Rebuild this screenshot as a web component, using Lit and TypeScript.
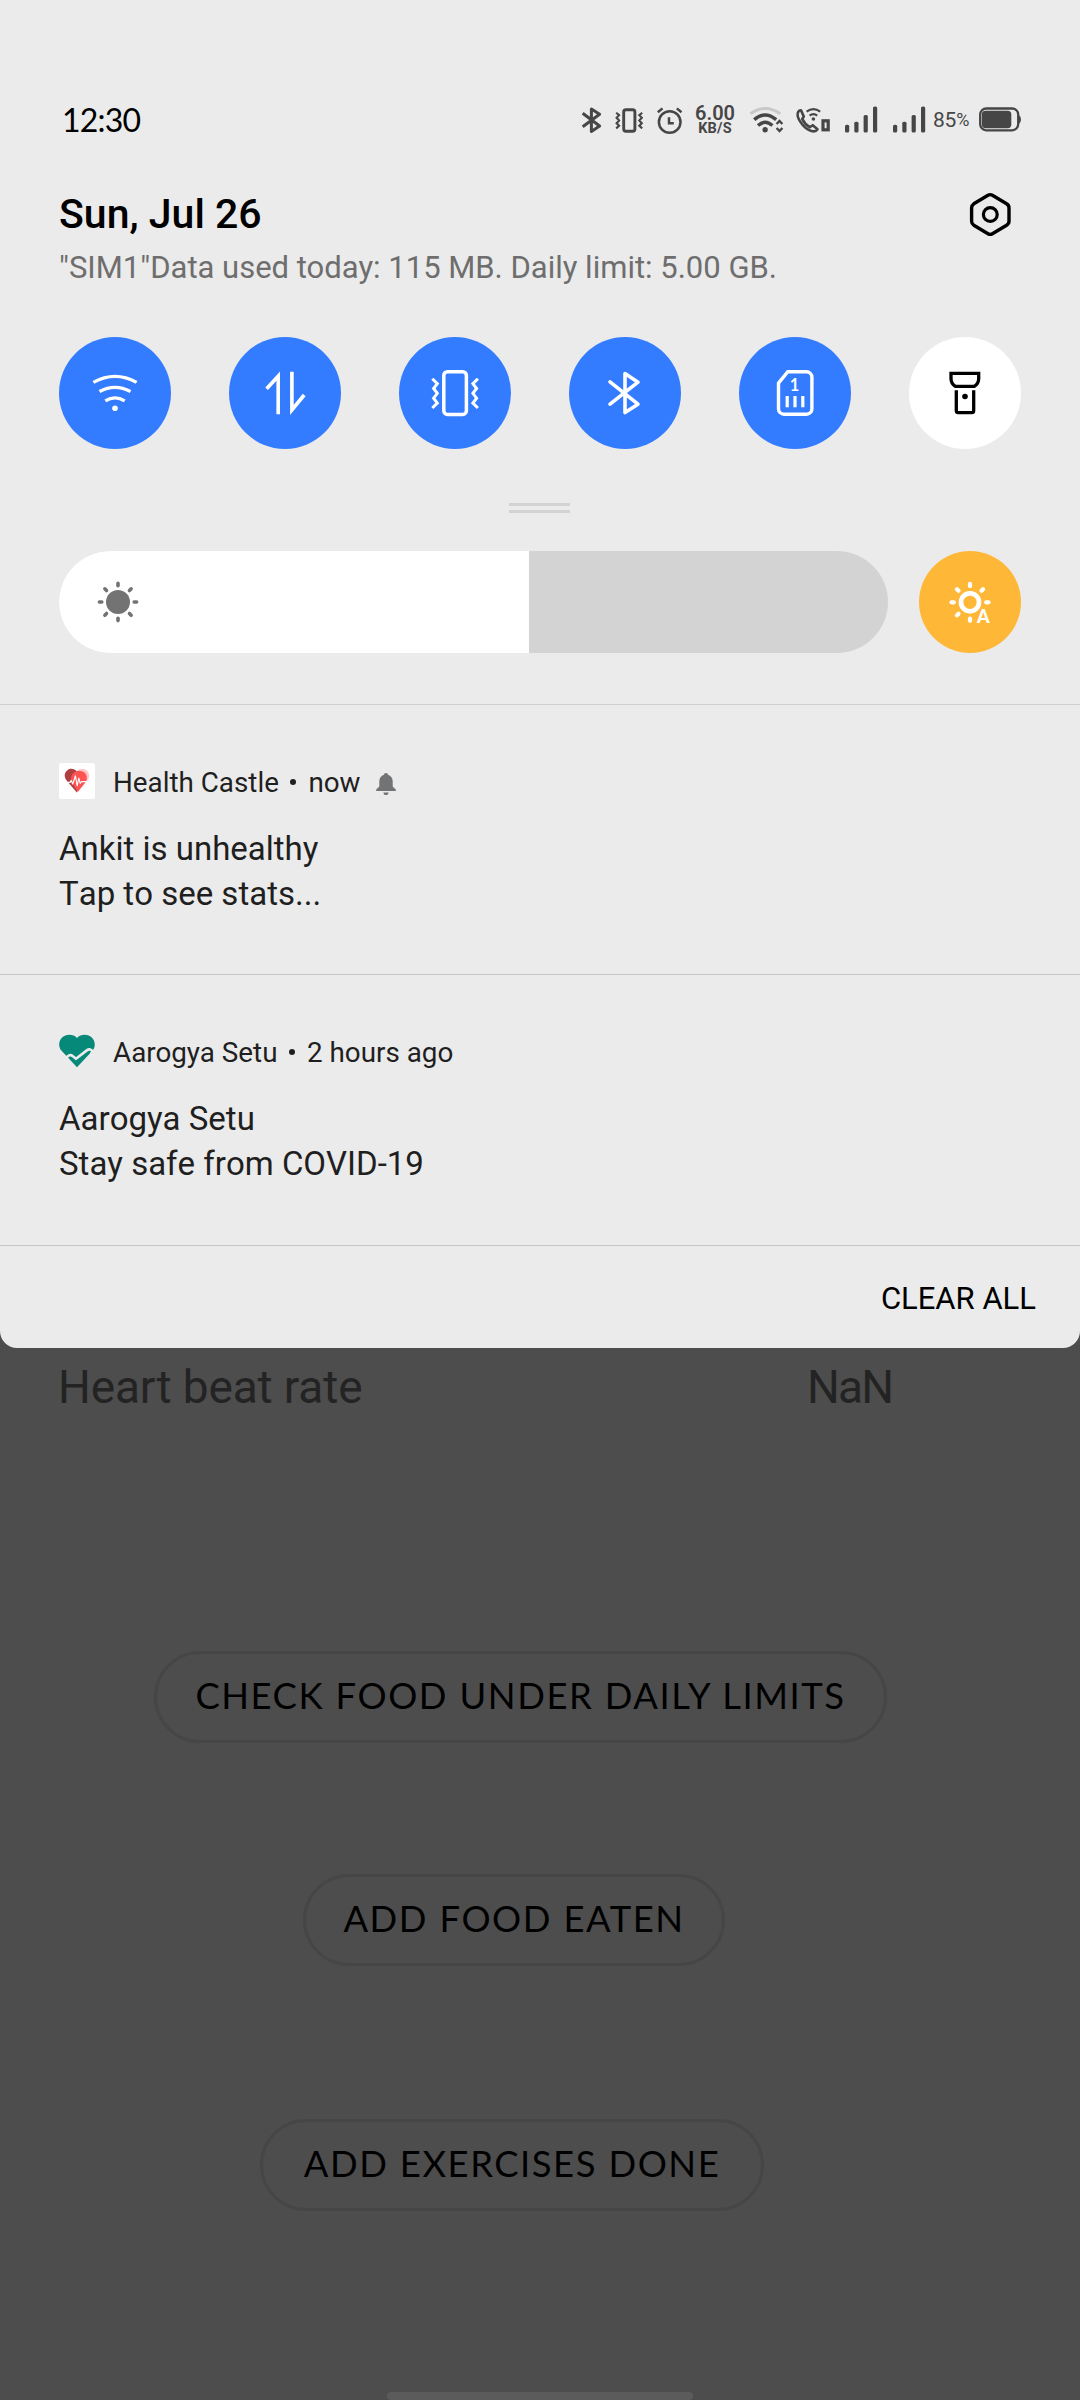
import { LitElement, html, svg, css } from "lit";
import { customElement, property } from "lit/decorators.js";

const rays = (cx: number, cy: number, from: number, to: number, angles: number[]) =>
  angles.map((deg) => {
    const a = (deg * Math.PI) / 180;
    const c = Math.cos(a);
    const s = Math.sin(a);
    return svg`<line x1=${cx + c * from} y1=${cy + s * from} x2=${cx + c * to} y2=${cy + s * to} />`;
  });

const tileIcons: Record<string, unknown> = {
  wifi: svg`<g stroke-width="3.3"><path d="M34.4 45.4Q56 33.2 77.6 45.4"/><path d="M40.5 54.5Q56 46.2 71.5 54.5"/><path d="M46.3 63.8Q56 58 65.7 63.8"/></g><circle cx="56" cy="71.3" r="2.8" fill="currentColor" stroke="none"/>`,
  data: svg`<g stroke-width="3.6" stroke-miterlimit="10"><path d="M37.6 51.8L49.2 39.2V77.3"/><path d="M62.9 34.7V73L75.2 58"/></g>`,
  vibrate: svg`<rect x="44.8" y="34.8" width="22.6" height="42.6" rx="3.6" stroke-width="3.5"/><g stroke-width="3"><path d="M33.3 41.7L38.3 46.7L34.6 51.5L38.3 56.3L34.6 61.2L38.3 66L33.3 71"/><path d="M78.9 41.7L73.9 46.7L77.6 51.5L73.9 56.3L77.6 61.2L73.9 66L78.9 71"/></g>`,
  bluetooth: svg`<path stroke-width="3.6" stroke-linecap="round" stroke-linejoin="round" d="M41 44.8L69 67.2L56 75.5V36.5L69 45.2L41 67.2"/>`,
  sim: svg`<path stroke-width="3.4" d="M48.8 34.8H67.4a5.5 5.5 0 0 1 5.5 5.5V71.7a5.5 5.5 0 0 1 -5.5 5.5H45a5.5 5.5 0 0 1 -5.5 -5.5V46.2Z"/><path stroke-width="3.2" d="M48.2 59V70.2M56 59V70.2M63.8 59V70.2"/><text class="sim-no" x="55.6" y="54" text-anchor="middle">1</text>`,
  torch: svg`<g stroke-width="3.3"><path d="M42 36.4H69.7V41.5C69.7 45.5 67.5 48 65.3 49.4H46.4C44.2 48 42 45.5 42 41.5Z"/><path d="M47.3 53.3V73.4Q47.3 75.6 49.4 75.6H62.6Q64.7 75.6 64.7 73.4V53.3"/></g><circle cx="56" cy="59.5" r="2.8" fill="currentColor" stroke="none"/>`,
};

@customElement("status-bar")
export class StatusBar extends LitElement {
  static styles = css`
    :host { display: flex; align-items: center; justify-content: space-between; height: 60px; padding: 90px 58px 0 62px; color: #464646; }
    .clock { font: 400 32px/60px Lato, Roboto, sans-serif; color: #000; letter-spacing: -0.8px; }
    .icons { display: flex; align-items: center; height: 30px; }
    svg { display: block; height: 30px; fill: none; stroke: currentColor; overflow: visible; }
    .bt { width: 21px; margin-right: 13px; }
    .vib { width: 28px; margin-right: 13px; }
    .alarm { width: 27px; margin-right: 12px; }
    .speed { width: 40px; margin-right: 13px; text-align: center; padding-top: 2px; white-space: nowrap; }
    .rate { font: 600 20px/16px Roboto, sans-serif; }
    .unit { font: 700 14.5px/16px Roboto, sans-serif; letter-spacing: 0.2px; }
    .wifi { width: 36px; margin-right: 11px; }
    .call { width: 36px; margin-right: 13px; }
    .signal { width: 34px; margin-right: 14px; fill: currentColor; stroke: none; }
    .signal.last { margin-right: 7px; }
    .percent { width: 38px; margin-right: 7px; font: 400 21px/30px Roboto, sans-serif; letter-spacing: -0.2px; white-space: nowrap; }
    .sign { font-size: 18px; vertical-align: 1px; }
    .battery { width: 44px; }
    .faint { stroke: #c9c9c9; }
    .solid { fill: currentColor; stroke: none; }
  `;

  private signal(last: boolean) {
    return html`<svg class="signal ${last ? "last" : ""}" viewBox="0 0 34 30">
      <rect x="1" y="19.7" width="4.2" height="7.8" rx="1.5"/><rect x="10.3" y="16.8" width="4.2" height="10.7" rx="1.5"/>
      <rect x="19.6" y="10" width="4.2" height="17.5" rx="1.5"/><rect x="29" y="1.6" width="4.2" height="25.9" rx="1.5"/></svg>`;
  }

  render() {
    return html`
      <div class="clock">12:30</div>
      <div class="icons">
        <svg class="bt" viewBox="0 0 21 30"><path stroke-width="3" stroke-linejoin="round" d="M1.7 8.3L18.6 21L10.4 26.4V4L18.6 9.3L1.7 21.8"/></svg>
        <svg class="vib" viewBox="0 0 28 30"><rect x="8.7" y="4.8" width="11.2" height="21.4" rx="2.2" stroke-width="2.9"/>
          <path stroke-width="2.1" d="M1.2 7.8L4.1 10.2L1.6 12.8L4.1 15.5L1.6 18.2L4.1 20.8L1.2 23.4M27.2 7.8L24.3 10.2L26.8 12.8L24.3 15.5L26.8 18.2L24.3 20.8L27.2 23.4"/></svg>
        <svg class="alarm" viewBox="0 0 27 30"><circle cx="13.7" cy="17" r="10.8" stroke-width="2.5"/><path stroke-width="2.5" d="M13 12.3V18.3H17.8M1.8 7.2L6.5 3.4M20.8 3.4L25.5 7.2"/></svg>
        <div class="speed"><div class="rate">6.00</div><div class="unit">KB/S</div></div>
        <svg class="wifi" viewBox="0 0 36 30"><path class="faint" stroke-width="3" d="M2.4 8.7Q17.3 -1.8 32.2 8.7"/>
          <path stroke-width="3.4" d="M6.2 14.6Q17.2 5.2 28.2 14.6M10 20.6Q17.2 14 24.4 20.6"/><circle class="solid" cx="17.1" cy="24.7" r="2.7"/>
          <path stroke-width="2.4" d="M28.6 19L31.5 16L34.4 19M28.6 23L31.5 26L34.4 23"/></svg>
        <svg class="call" viewBox="0 0 36 30"><path stroke-width="2.6" stroke-linejoin="round" d="M3.2 7C2 9 2.6 12.6 5.2 16.6C8 21 12.5 24.8 16.4 26C19 26.8 21.3 26 22.5 24.2L17.7 20.2L14.8 22.2C11.6 20.4 8.8 17.4 7.2 13.9L8.8 11.6L6 5.3C4.8 5.2 3.8 5.8 3.2 7Z"/>
          <path stroke-width="2.3" d="M11.6 6.6Q18.4 1.6 25.2 6.6M14.6 10.6Q18.4 7.6 22.2 10.6"/><circle class="solid" cx="18.4" cy="14" r="1.8"/><rect x="28" y="15.8" width="5.2" height="9" stroke-width="3.2"/></svg>
        ${this.signal(false)} ${this.signal(true)}
        <div class="percent">85<span class="sign">%</span></div>
        <svg class="battery" viewBox="0 0 44 30"><rect x="2.2" y="3.5" width="38" height="21.8" rx="6" stroke-width="2.3"/><rect class="solid" x="3.9" y="5.8" width="29.4" height="17.4" rx="3.6"/><path class="solid" d="M41 10.4C43.6 11.4 43.6 17.4 41 18.4Z"/></svg>
      </div>`;
  }
}

@customElement("quick-tile")
export class QuickTile extends LitElement {
  @property() icon = "";
  @property({ type: Boolean, reflect: true }) active = false;
  static styles = css`
    :host { display: block; width: 112px; height: 112px; border-radius: 50%; background: #fff; color: #000; }
    :host([active]) { background: #347cff; color: #fff; }
    svg { display: block; width: 112px; height: 112px; fill: none; stroke: currentColor; }
    .sim-no { font: 700 16.5px Lato, Roboto, sans-serif; fill: currentColor; stroke: none; }
  `;
  render() {
    return html`<svg viewBox="0 0 112 112">${tileIcons[this.icon]}</svg>`;
  }
}

@customElement("notification-item")
export class NotificationItem extends LitElement {
  @property() app = "";
  @property() when = "";
  @property() heading = "";
  @property() body = "";
  @property() logo = "";
  @property({ type: Boolean }) alerting = false;
  static styles = css`
    :host { display: block; box-sizing: border-box; padding: 58px 59px 0; border-bottom: 1px solid #c6c6c6; color: #1f1f1f; font-family: Roboto, sans-serif; }
    .head { display: flex; height: 36px; font-size: 27.8px; line-height: 40px; white-space: nowrap; }
    .logo { width: 36px; height: 36px; margin-right: 18px; }
    .dot { width: 6px; height: 6px; border-radius: 50%; background: #1f1f1f; margin: 16px 12px 0 11.5px; }
    .bell { width: 20px; height: 24px; margin: 9px 0 0 15px; fill: #717375; }
    .lines { margin-top: 27px; font-size: 33px; line-height: 45px; font-kerning: none; }
  `;

  private get mark() {
    if (this.logo === "castle") {
      return html`<svg class="logo" viewBox="0 0 36 36"><rect width="36" height="36" rx="2" fill="#fff"/>
        <path fill="#fbc9ca" d="M17.5 9C19.5 5.4 24 4.8 27.2 7C30.8 9.6 31 13.6 29 17L25 20Z"/>
        <path fill="#b03f42" d="M18 29.8L8 18C4.8 14 5 9.8 8.4 7.2C11.4 4.8 15.6 5.6 17.8 8.6L20 12Z"/>
        <path fill="#ff5353" d="M18.8 29L13 19.6C11 15.4 12.4 11 16 8.8C19.6 7 24 7.6 26.4 10.6C28.6 13.6 28.2 16.8 26.2 19.8Z"/>
        <path fill="none" stroke="#fff" stroke-width="1.1" stroke-linejoin="round" d="M5.6 19.4H11L12.2 17.4L13.6 21L15.4 16L16.4 12.8L18.2 22.8L19.8 15L21.2 20.4L22.4 18.6H28.6"/></svg>`;
    }
    return html`<svg class="logo" viewBox="0 0 36 36"><path fill="#078979" d="M18 5C21.4 1.2 28 .6 32 3.8C36.6 7.6 37 14 33.2 18L18 34.2L2.8 18C-1 14 -.8 7.4 4 3.8C8.2 .6 14.8 1.2 18 5Z"/>
      <path fill="none" stroke="#ebebeb" stroke-width="2.6" stroke-linecap="round" stroke-linejoin="round" d="M7.4 25C9 21.8 11.8 21.4 13.6 23L17 25.8L27.8 17.4C30.2 15.6 32.8 16.4 33.2 18.4L32 21.6"/></svg>`;
  }

  render() {
    return html`
      <div class="head">${this.mark}<span>${this.app}</span><i class="dot"></i><span>${this.when}</span>
        ${this.alerting
          ? html`<svg class="bell" viewBox="0 0 20 24"><path d="M10 1C11.2 1 12 1.8 12 2.8C15 3.8 16.7 6.2 16.7 9.4V14.6L19.8 17.4V19H.2V17.4L3.3 14.6V9.4C3.3 6.2 5 3.8 8 2.8C8 1.8 8.8 1 10 1ZM7.4 20.4H12.6C12.6 22 11.4 23 10 23S7.4 22 7.4 20.4Z"/></svg>`
          : null}
      </div>
      <div class="lines"><div>${this.heading}</div><div>${this.body}</div></div>`;
  }
}

@customElement("app-root")
export class AppRoot extends LitElement {
  private tiles = ["wifi", "data", "vibrate", "bluetooth", "sim", "torch"];
  private brightness = 56.7;

  static styles = css`
    :host { display: block; width: 1080px; height: 2400px; overflow: hidden; background: #4d4d4d; font-family: Roboto, sans-serif; }
    .screen { display: flex; flex-direction: column; height: 2400px; }
    .panel { height: 1348px; box-sizing: border-box; background: #ebebeb; border-radius: 0 0 17px 17px; flex: none; }
    .header { display: flex; justify-content: space-between; padding: 37px 59px 0; white-space: nowrap; }
    .date { font-size: 41px; font-weight: 500; line-height: 54px; color: #000; }
    .usage { font-size: 31px; line-height: 54px; color: #6e6e6e; }
    .settings { width: 60px; height: 60px; margin: -3px 1px 0 0; fill: none; stroke: #000; }
    .tiles { display: flex; justify-content: space-between; padding: 42px 59px 0; }
    .handle { width: 61px; height: 4px; margin: 54px 0 0 509px; border-top: 3px solid #d3d3d3; border-bottom: 3px solid #d3d3d3; }
    .light { display: flex; justify-content: space-between; padding: 38px 59px 51px; border-bottom: 1px solid #cfcfcf; }
    .slider { width: 829px; height: 102px; border-radius: 51px; overflow: hidden; background: #d3d3d3; }
    .fill { height: 102px; background: #fff; }
    .sun { display: block; width: 118px; height: 102px; fill: #737373; stroke: #737373; }
    .auto { width: 102px; height: 102px; border-radius: 50%; background: #feb737; fill: none; stroke: #fff; }
    .auto-a { font: 900 18px Lato, Roboto, sans-serif; fill: #fff; stroke: none; }
    .first { height: 270px; }
    .second { height: 271px; }
    .footer { height: 98px; padding: 4px 44px 0; text-align: right; font-size: 31px; line-height: 98px; color: #000; }
    .behind { flex: 1; display: flex; flex-direction: column; align-items: flex-start; }
    .vital { display: grid; grid-template-columns: 749px 1fr; padding-left: 58px; width: 1022px; height: 78px; font-size: 46px; line-height: 78px; color: #232323; letter-spacing: -0.12px; }
    .value { letter-spacing: -1.8px; }
    .action { box-sizing: border-box; height: 92px; border: 3px solid #464646; border-radius: 46px; background: none; color: #000; font: 400 36.4px/80px Lato, Roboto, sans-serif; letter-spacing: 1.55px; word-spacing: 0.6px; text-align: center; padding: 0 0 5px; white-space: nowrap; }
    .check { width: 733px; margin: 225px 0 0 154px; }
    .eaten { width: 422px; margin: 131px 0 0 303px; }
    .done { width: 504px; margin: 153px 0 0 260px; }
    .nav { width: 306px; height: 8px; margin: auto 0 0 387px; border-radius: 4px; background: #5b5b5b; }
  `;

  render() {
    return html`
      <div class="screen">
        <section class="panel">
          <status-bar></status-bar>
          <div class="header">
            <div><div class="date">Sun, Jul 26</div><div class="usage">"SIM1"Data used today: 115 MB. Daily limit: 5.00 GB.</div></div>
            <svg class="settings" viewBox="0 0 60 60"><path stroke-width="3.4" stroke-linejoin="round" d="M28 11.3Q30.2 10 32.4 11.3L46.6 19.8Q49 21.3 49 23.8V37.2Q49 39.7 46.6 41.2L32.4 49.7Q30.2 51 28 49.7L13.8 41.2Q11.6 39.7 11.6 37.2V23.8Q11.6 21.3 13.8 19.8Z"/><circle cx="30.3" cy="30.5" r="6.9" stroke-width="3.2"/></svg>
          </div>
          <div class="tiles">${this.tiles.map((t) => html`<quick-tile icon=${t} ?active=${t !== "torch"}></quick-tile>`)}</div>
          <div class="handle"></div>
          <div class="light">
            <div class="slider"><div class="fill" style="width:${this.brightness}%">
              <svg class="sun" viewBox="0 0 118 102"><circle cx="59" cy="51" r="12" stroke="none"/><g stroke-width="3.6" stroke-linecap="round">${rays(59, 51, 16.2, 18.6, [0, 45, 90, 135, 180, 225, 270, 315])}</g></svg>
            </div></div>
            <svg class="auto" viewBox="0 0 102 102"><circle cx="51" cy="51.3" r="9" stroke-width="4.7"/><g stroke-width="4.2" stroke-linecap="round">${rays(51, 51.3, 16.2, 18.5, [0, 90, 135, 180, 225, 270, 315])}</g><text class="auto-a" x="64.3" y="71.6" text-anchor="middle">A</text></svg>
          </div>
          <notification-item class="first" logo="castle" app="Health Castle" when="now" heading="Ankit is unhealthy" body="Tap to see stats..." alerting></notification-item>
          <notification-item class="second" logo="setu" app="Aarogya Setu" when="2 hours ago" heading="Aarogya Setu" body="Stay safe from COVID-19"></notification-item>
          <div class="footer">CLEAR ALL</div>
        </section>
        <section class="behind">
          <div class="vital"><span>Heart beat rate</span><span class="value">NaN</span></div>
          <button class="action check">CHECK FOOD UNDER DAILY LIMITS</button>
          <button class="action eaten">ADD FOOD EATEN</button>
          <button class="action done">ADD EXERCISES DONE</button>
          <div class="nav"></div>
        </section>
      </div>`;
  }
}
